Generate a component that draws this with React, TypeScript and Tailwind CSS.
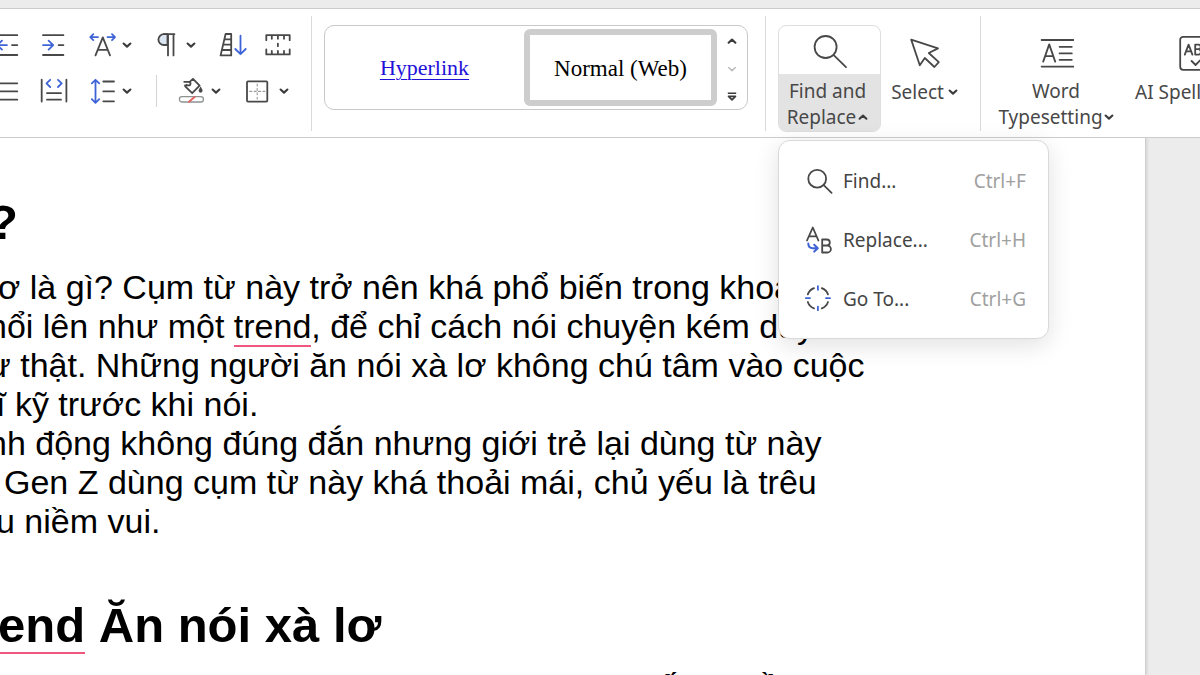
import type { ReactNode } from "react";

const INK = "#484848";
const BLUE = "#3e63d6";

function Icon({ w = 28, h = 28, children }: { w?: number; h?: number; children: ReactNode }) {
  return (
    <svg
      width={w}
      height={h}
      viewBox={`0 0 ${w} ${h}`}
      fill="none"
      stroke={INK}
      strokeWidth={1.8}
      strokeLinecap="round"
      strokeLinejoin="round"
      className="shrink-0"
      aria-hidden="true"
    >
      {children}
    </svg>
  );
}

function Chevron({ up = false, muted = false }: { up?: boolean; muted?: boolean }) {
  return (
    <svg width="10" height="10" viewBox="0 0 10 10" fill="none" className="shrink-0" aria-hidden="true">
      <path
        d={up ? "M1.6 6.7 5 3.6 8.4 6.7" : "M1.6 3.5 5 6.6 8.4 3.5"}
        stroke={muted ? "#bdbdbd" : "#3c3c3c"}
        strokeWidth={muted ? 1.6 : 2.1}
        strokeLinecap="round"
        strokeLinejoin="round"
      />
    </svg>
  );
}

function Tool({ label, menu = false, children }: { label: string; menu?: boolean; children: ReactNode }) {
  return (
    <button type="button" aria-label={label} className="flex items-center gap-1.5">
      {children}
      {menu && <Chevron />}
    </button>
  );
}

function ParagraphTools() {
  return (
    <div className="flex w-[311px] shrink-0 flex-col gap-4 pt-[22px]">
      <div className="flex items-center gap-5">
        <div className="flex gap-3">
          <Tool label="Decrease indent">
            <Icon>
              <path d="M-6 4.2H17.3M-6 24H17.3M12 14.1h5.3" />
              <path d="M7 14.1H-3M2 9.6-2.6 14.1 2 18.6" stroke={BLUE} />
            </Icon>
          </Tool>
          <Tool label="Increase indent">
            <Icon>
              <path d="M3 4.2h20.4M3 24h20.4M18.6 14.1h4.8" />
              <path d="M3 14.1h9.8M8.6 9.6l4.6 4.5-4.6 4.5" stroke={BLUE} />
            </Icon>
          </Tool>
        </div>
        <Tool label="Character scaling" menu>
          <Icon>
            <path d="M7.5 24.4 14.8 6.4l7.2 18M10 18.9h9.6" />
            <path d="M2.5 6.1h7.5M5.3 3.1l-3 3 3 3M19.5 6.1h7.3M24 3.1l3 3-3 3" stroke={BLUE} />
          </Icon>
        </Tool>
        <Tool label="Paragraph marks" menu>
          <Icon>
            <path d="M15.5 3.2H11.8a5.4 5.4 0 0 0 0 10.8h3.7z" fill="#dce5f2" />
            <path d="M11.8 3.2H22.4M16 3.2V24.4M21.5 3.2V24.4" />
          </Icon>
        </Tool>
        <div className="flex gap-4">
          <Tool label="Sort">
            <Icon w={32}>
              <path d="M9.6 3h5.6V24.4H4.6zM8.5 8.4h6.7M7.3 13.6h7.9M5.8 19h9.4" />
              <path d="M24.5 4.7V23M19.3 18l5.2 5.2 5.2-5.2" stroke={BLUE} />
            </Icon>
          </Tool>
          <Tool label="Ruler grid">
            <Icon>
              <path d="M2.3 9.2V4.2h23.4V9.2M2.3 18.4v5h23.4v-5M7.8 4.3v3.5M13.9 4.3v3.5M20 4.3v3.5M7.8 23.3v-3.4M13.9 23.3v-3.4M20 23.3v-3.4M13.9 12.6v2.6" />
            </Icon>
          </Tool>
        </div>
      </div>
      <div className="flex items-center gap-5">
        <div className="flex gap-3">
          <Tool label="Justify">
            <Icon>
              <path d="M-4 6.3H17.3M-4 14.4H17.3M-4 22.7H17.3" />
            </Icon>
          </Tool>
          <Tool label="Distribute">
            <Icon>
              <path d="M1.7 2.7v21.8M26.4 2.7v21.8M7 16.2h14M7 22.7h14" />
              <path d="M10.2 2.8 6.5 6.4l3.7 3.6M18 2.8l3.7 3.6L18 10" stroke={BLUE} />
            </Icon>
          </Tool>
        </div>
        <Tool label="Line spacing" menu>
          <Icon>
            <path d="M15.3 4.5H26M15.3 14.4H26M15.3 24.3H26" />
            <path d="M7.5 3v22.6M3.8 6.4 7.5 2.8l3.7 3.6M3.8 22.2l3.7 3.6 3.7-3.6" stroke={BLUE} />
          </Icon>
        </Tool>
        <div className="ml-1 h-8 w-px bg-[#d4d4d4]" />
        <Tool label="Shading" menu>
          <Icon>
            <path d="M12.4 5.2 16 1.8l6.6 6.8-7.4 7.6L8.2 9.4l1.6-1.6M7.2 4.8h5.4a2.2 2.2 0 0 1 0 3.6H8" />
            <path d="M23.6 10.3c-1 1.7-1.6 2.5-1.6 3.4a1.6 1.6 0 0 0 3.2 0c0-.9-.6-1.7-1.6-3.4z" fill={INK} strokeWidth={0.8} />
            <rect x="2.4" y="19.6" width="24" height="5.4" rx="2.6" stroke="#8d9292" strokeWidth={1.3} />
            <path d="M12 24.8 17.6 20" stroke="#e2635f" />
          </Icon>
        </Tool>
        <div className="ml-1 flex">
          <Tool label="Borders" menu>
            <Icon>
              <rect x="2" y="4.3" width="20.3" height="20.3" rx="1" />
              <path d="M12.2 7v15M4.8 14.4h15" stroke="#9a9a9a" strokeWidth={1.1} strokeDasharray="2 2.4" />
            </Icon>
          </Tool>
        </div>
      </div>
    </div>
  );
}

function Divider() {
  return <div className="mt-[7px] h-[115px] w-px shrink-0 bg-[#dadada]" />;
}

function StyleGallery() {
  return (
    <div className="mt-4 mr-[17px] ml-3 flex h-[85px] w-[424px] shrink-0 rounded-[10px] border border-[#c9c9c9]">
      <button
        type="button"
        className="flex flex-1 items-center justify-center font-['Liberation_Serif',serif] text-[22px] text-[#1d12d8] underline decoration-1 underline-offset-4"
      >
        Hyperlink
      </button>
      <button
        type="button"
        className="my-[3px] w-[193px] rounded-md border-[6px] border-[#cdcdcd] pt-0.5 font-['Liberation_Serif',serif] text-[23px] text-black"
      >
        Normal (Web)
      </button>
      <div className="flex w-[30px] flex-col items-center justify-between pt-2.5 pb-[7px]">
        <button type="button" aria-label="Previous styles" className="flex">
          <Chevron up />
        </button>
        <button type="button" aria-label="Next styles" className="flex">
          <Chevron muted />
        </button>
        <button type="button" aria-label="More styles" className="flex">
          <svg width="10" height="10" viewBox="0 0 10 10" fill="none" stroke="#3c3c3c" aria-hidden="true">
            <path d="M.8 1.3h8.4M1.5 4.4h7L5 7.9z" strokeWidth={1.6} strokeLinejoin="round" />
          </svg>
        </button>
      </div>
    </div>
  );
}

const menuItems = [
  {
    label: "Find...",
    keys: "Ctrl+F",
    icon: (
      <Icon>
        <circle cx="12.2" cy="11.7" r="8.9" />
        <path d="M18.7 18.2 26.6 25.8" />
      </Icon>
    ),
  },
  {
    label: "Replace...",
    keys: "Ctrl+H",
    icon: (
      <Icon>
        <path d="M2 14.5 7.8 1.5l5.6 13M4.2 10.3h7.2" />
        <path d="M17.2 13.5v13h5.2a3.5 3.5 0 0 0 0-7h-5.2M17.2 13.5h4.6a3 3 0 0 1 0 6" />
        <path d="M3.3 17.5c0 3.6 1.5 4.7 4.5 4.7h4M9.2 18.8l3.6 3.4-3.6 3.4" stroke={BLUE} strokeWidth={2} />
      </Icon>
    ),
  },
  {
    label: "Go To...",
    keys: "Ctrl+G",
    icon: (
      <Icon>
        <path d="M9 3.2a10.5 10.5 0 0 0-6.2 6.2M16.8 3.2a10.5 10.5 0 0 1 6.2 6.2M23 17a10.5 10.5 0 0 1-6.2 6.4M9 23.4A10.5 10.5 0 0 1 2.8 17" />
        <path d="M12.9 1.2v3.6M12.9 21.6v3.6M.9 13.2h4M21 13.2h4" stroke={BLUE} />
      </Icon>
    ),
  },
];

function FindMenu() {
  return (
    <div
      role="menu"
      className="absolute top-full left-0 z-10 mt-2 w-[271px] rounded-xl border border-[#d9d9d9] bg-white py-2.5 shadow-[0_6px_24px_rgba(0,0,0,0.12)]"
    >
      {menuItems.map((item) => (
        <button
          key={item.label}
          type="button"
          role="menuitem"
          className="flex h-[59px] w-full items-center gap-2.5 pr-[22px] pl-[26px] text-left"
        >
          {item.icon}
          <span className="flex-1 text-[#444444]">{item.label}</span>
          <span className="text-[#a0a0a0]">{item.keys}</span>
        </button>
      ))}
    </div>
  );
}

function Ribbon() {
  return (
    <header className="relative z-10 flex h-[130px] border-y border-[#cccccc] bg-white font-['Noto_Sans',sans-serif] text-[19px] leading-[26px] text-[#484848]">
      <ParagraphTools />
      <Divider />
      <StyleGallery />
      <Divider />
      <div className="relative mt-4 mb-[5px] ml-3 w-[103px] shrink-0">
        <button
          type="button"
          aria-haspopup="menu"
          aria-expanded="true"
          className="flex h-full w-full flex-col overflow-hidden rounded-lg border border-[#dedede]"
        >
          <span className="flex h-12 w-full shrink-0 items-center justify-center pt-1">
            <Icon w={36} h={36}>
              <circle cx="13.6" cy="13" r="11" />
              <path d="M21.7 21.2 34 33.2" />
            </Icon>
          </span>
          <span className="w-full flex-1 bg-[#e3e3e3] pt-1 pr-1 whitespace-nowrap">
            Find and
            <span className="flex items-center justify-center gap-0.5">
              Replace <Chevron up />
            </span>
          </span>
        </button>
        <FindMenu />
      </div>
      <button type="button" className="flex w-[99px] shrink-0 flex-col items-center pt-[26px] pr-3">
        <Icon w={32} h={36}>
          <path d="M2.2 4.6 29 13.4 19.8 18l10 9.2-4.4 4.8-9.6-9-5 7.2z" />
        </Icon>
        <span className="mt-2 flex items-center gap-1">
          Select <Chevron />
        </span>
      </button>
      <Divider />
      <button type="button" className="flex w-[154px] shrink-0 flex-col items-center pt-[25px] pr-1">
        <Icon w={36} h={36}>
          <path d="M3.6 6h32M3.6 32.6h32M21.6 12.8h12.2M21.6 19.4h12.2M21.6 25.8h12.2M5.2 27.6 11.2 10.4l6 17.2M7.2 22.2h8" />
        </Icon>
        <span className="mt-2">Word</span>
        <span className="flex items-center gap-px">
          Typesetting <Chevron />
        </span>
      </button>
      <button type="button" className="flex shrink-0 flex-col items-center pt-[26px] whitespace-nowrap">
        <Icon w={36} h={36}>
          <rect x="1.2" y="1.8" width="33" height="33" rx="3" />
          <path d="M5.8 19.6 9.6 9.6l3.8 10M7 16.4h5.2M16.2 9.6v10h3.6a2.8 2.8 0 0 0 0-5.4h-3.6M16.2 9.6h3.2a2.3 2.3 0 0 1 0 4.6M12.6 26l4 4 7-7" />
        </Icon>
        <span className="mt-2">AI Spell Check</span>
      </button>
    </header>
  );
}

function Flagged({ children }: { children: ReactNode }) {
  return <span className="border-b-2 border-[#f0577f]">{children}</span>;
}

function Document() {
  return (
    <main className="flex flex-1 overflow-hidden bg-[#ececec]">
      <article className="mr-[54px] flex-1 overflow-hidden border-r border-[#cfcfcf] bg-white font-['Liberation_Sans',sans-serif] text-[34px] leading-[39px] whitespace-nowrap text-black shadow-[1px_0_3px_rgba(0,0,0,0.12)]">
        <h2 className="-ml-3 pt-14 text-[49px] leading-14 font-bold">?</h2>
        <div className="pt-[18px]">
          <p className="-ml-0.5">ơ là gì? Cụm từ này trở nên khá phổ biến trong khoảng</p>
          <p className="-ml-3">
            nổi lên như một <Flagged>trend</Flagged>, để chỉ cách nói chuyện kém duyên
          </p>
          <p className="-ml-3">ự thật. Những người ăn nói xà lơ không chú tâm vào cuộc</p>
          <p className="-ml-1">ĩ kỹ trước khi nói.</p>
          <p className="-ml-3">nh động không đúng đắn nhưng giới trẻ lại dùng từ này</p>
          <p className="ml-1">Gen Z dùng cụm từ này khá thoải mái, chủ yếu là trêu</p>
          <p className="-ml-1">u niềm vui.</p>
        </div>
        <h2 className="-ml-0.5 pt-14 text-[49px] leading-14 font-bold">
          <Flagged>end</Flagged> Ăn nói xà lơ
        </h2>
        <p className="flex gap-[84px] pt-3.5 pl-[658px]">
          <span>ấ</span>
          <span>ầ</span>
        </p>
      </article>
    </main>
  );
}

export default function App() {
  return (
    <div className="flex h-screen flex-col overflow-hidden bg-[#ececec] pt-2">
      <Ribbon />
      <Document />
    </div>
  );
}
